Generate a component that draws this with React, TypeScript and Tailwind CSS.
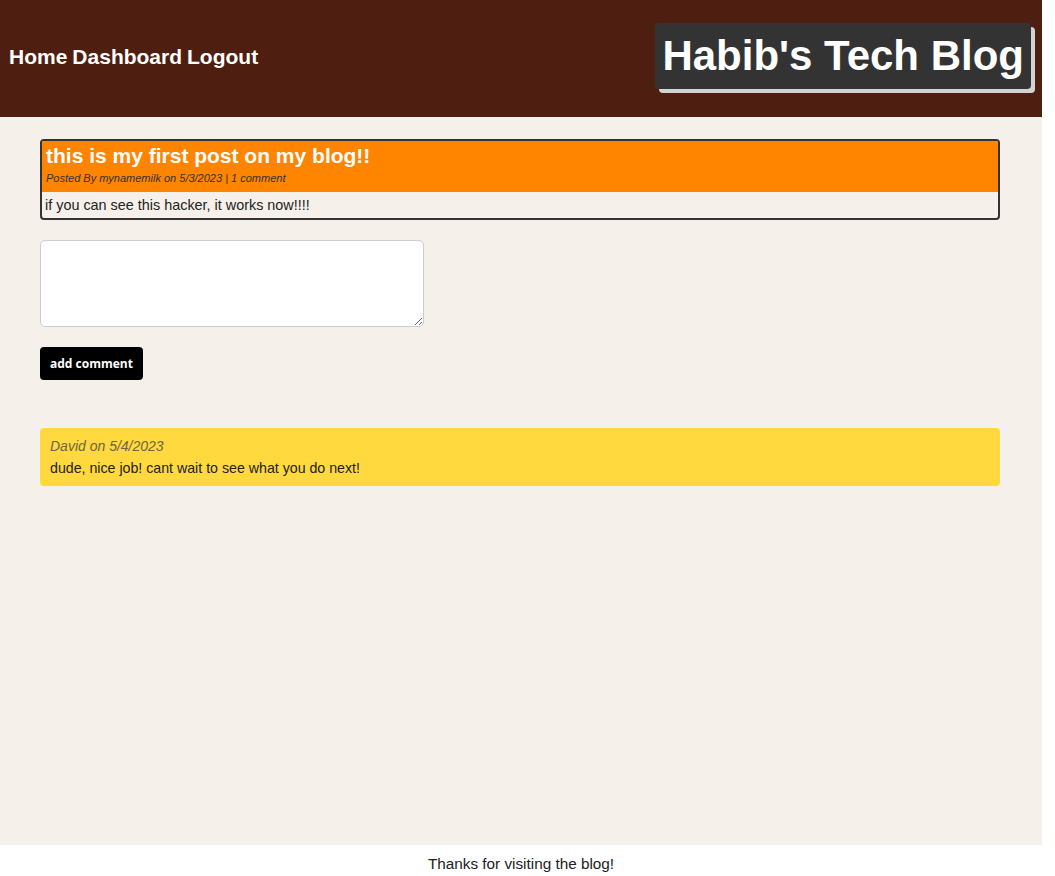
export default function App() {
  return (
    <div className="w-[1042px] flex flex-col bg-[#f5f0e9] font-['Liberation_Sans',Arial,sans-serif] text-[#222]">
      {/* Header */}
      <header className="h-[117px] bg-[#4e1f10] flex items-center justify-between pl-[9px] pr-[11px]">
        <nav className="mb-[4px] flex gap-[5px] text-[21px] font-bold text-white">
          <a href="#">Home</a>
          <a href="#">Dashboard</a>
          <a href="#">Logout</a>
        </nav>
        <h1 className="mb-[5px] px-[7px] h-[66px] flex items-center bg-[#333] rounded-[4px] shadow-[4px_4px_0_#d3d3d3] text-[42px] font-bold text-white leading-none">
          Habib's Tech Blog
        </h1>
      </header>

      {/* Main */}
      <main className="h-[728px] pl-[40px] pr-[42px] pt-[22px]">
        <article className="border-2 border-[#333] rounded-[4px] overflow-hidden">
          <div className="bg-[#ff8400] px-[4px] pt-[3px] pb-[7px]">
            <h2 className="text-[21px] font-bold text-white leading-[24px]">this is my first post on my blog!!</h2>
            <p className="text-[11px] italic text-[#333] leading-[14px] mt-[3px]">
              Posted By mynamemilk on 5/3/2023 | 1 comment
            </p>
          </div>
          <p className="px-[3px] py-[4px] text-[14.4px] leading-[18px]">
            if you can see this hacker, it works now!!!!
          </p>
        </article>

        <form className="mt-[20px] flex flex-col items-start">
          <textarea className="w-[384px] h-[87px] bg-white border border-[#ccc] rounded-[5px] p-2 outline-none" />
          <button
            type="button"
            className="mt-[20px] h-[33px] px-[10px] bg-black text-white rounded-[4px] text-[12px] font-bold font-['Open_Sans',sans-serif]"
          >
            add comment
          </button>
        </form>

        <div className="mt-[48px] bg-[#ffd93d] rounded-[4px] px-[10px] pt-[9px] pb-[9px]">
          <p className="text-[14px] italic text-[#6b6540] leading-[18px]">David on 5/4/2023</p>
          <p className="text-[14.2px] leading-[18px] mt-[4px]">dude, nice job! cant wait to see what you do next!</p>
        </div>
      </main>

      {/* Footer */}
      <footer className="bg-white pt-[10px] pb-[12px] text-center text-[15.3px] leading-[18px]">
        Thanks for visiting the blog!
      </footer>
    </div>
  );
}
